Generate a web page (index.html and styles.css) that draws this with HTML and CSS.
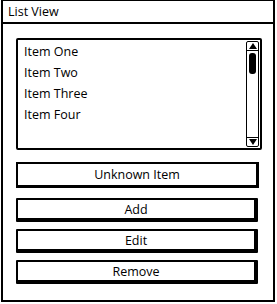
FILE: index.html
```html
<!DOCTYPE html>
<html lang="en">
<head>
  <meta charset="UTF-8">
  <title>List View</title>
  <link rel="stylesheet" href="styles.css">
</head>
<body>
  <div class="window">
    <div class="title-bar">List View</div>
    <div class="content">
      <div class="list-box">
        <ul class="items">
          <li>Item One</li>
          <li>Item Two</li>
          <li>Item Three</li>
          <li>Item Four</li>
        </ul>
        <div class="scrollbar">
          <div class="arrow up"><svg width="8" height="6" viewBox="0 0 8 6"><path d="M0 6 L4 0 L8 6 Z" fill="#000"/></svg></div>
          <div class="thumb"></div>
          <div class="track"></div>
          <div class="arrow down"><svg width="8" height="6" viewBox="0 0 8 6"><path d="M0 0 L4 6 L8 0 Z" fill="#000"/></svg></div>
        </div>
      </div>
      <div class="field">Unknown Item</div>
      <div class="buttons">
        <button class="btn">Add</button>
        <button class="btn">Edit</button>
        <button class="btn">Remove</button>
      </div>
    </div>
  </div>
</body>
</html>
```

FILE: styles.css
```css
html, body {
  margin: 0; padding: 0;
  background: #fff;
  font-family: 'Open Sans', 'DejaVu Sans', sans-serif;
  color: #000;
}
.window {
  width: 270px; height: 299px;
  margin: 0 0 0 1px;
  border: 2px solid #000;
  border-top-width: 1px;
  display: flex; flex-direction: column;
}
.title-bar {
  height: 21px; line-height: 21px;
  border-bottom: 2px solid #000;
  padding-left: 5px;
  font-size: 12.5px;
}
.content {
  padding: 14px 11px 0 13px;
  display: flex; flex-direction: column;
}
.list-box {
  height: 108px;
  border: 2px solid #000;
  border-radius: 2px;
  display: flex;
}
.items {
  list-style: none; margin: 0; padding: 1px 0 0 6px;
  flex: 1;
  font-size: 12.5px;
}
.items li { height: 21px; line-height: 21px; }
.scrollbar {
  width: 11px;
  margin: 1px 1px 1px 0;
  border: 1.5px solid #000;
  border-radius: 2px;
  display: flex; flex-direction: column; align-items: center;
}
.arrow { height: 8px; display: flex; align-items: center; justify-content: center; }
.arrow.up { border-bottom: 1px solid #000; width: 100%; }
.arrow.down { border-top: 1px solid #000; width: 100%; }
.thumb {
  width: 7px; height: 21px;
  margin-top: 2px;
  background: #000;
  border-radius: 3px;
}
.track { flex: 1; }
.field {
  margin-top: 12px;
  height: 21px; line-height: 21px;
  border: 2px solid #000;
  border-right-width: 3px; border-bottom-width: 3px;
  text-align: center;
  font-size: 12.5px;
  width: 238px;
}
.buttons {
  margin-top: 10px;
  display: flex; flex-direction: column; gap: 7px;
}
.btn {
  font-family: inherit; font-size: 12.5px;
  background: #fff; color: #000;
  width: 242px; height: 24px; padding: 0;
  border: 2px solid #000;
  border-right-width: 4px; border-bottom-width: 4px;
  border-radius: 1px;
  text-align: center;
}
```
